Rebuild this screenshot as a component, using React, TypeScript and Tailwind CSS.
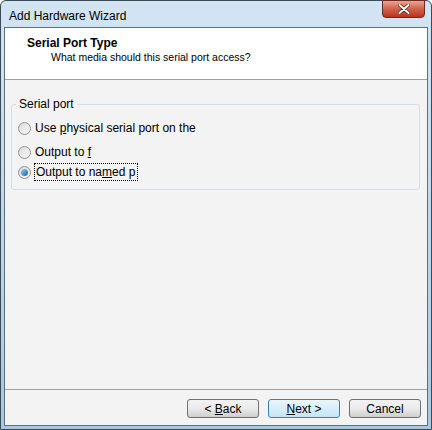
const Radio = ({ checked }: { checked?: boolean }) => (
  <span className="relative flex h-[13px] w-[13px] shrink-0 items-center justify-center rounded-full border border-[#8f8f8f] bg-gradient-to-br from-[#dcdcdc] to-[#f8f8f8]">
    {checked && (
      <span className="h-[7px] w-[7px] rounded-full bg-gradient-to-br from-[#8fd3f5] to-[#1a5f9c]" />
    )}
  </span>
)

const Button = ({ children, primary }: { children: React.ReactNode; primary?: boolean }) => (
  <div
    className={`flex h-[19px] w-[72px] items-center justify-center rounded-[3px] border text-[12px] text-black ${
      primary
        ? "border-[#3c7fb1] bg-gradient-to-b from-[#eaf6fd] to-[#c4e5f6]"
        : "border-[#707070] bg-gradient-to-b from-[#f2f2f2] via-[#ebebeb] to-[#cfcfcf]"
    }`}
  >
    <span className="whitespace-pre">{children}</span>
  </div>
)

export default function App() {
  return (
    <div className="flex h-[430px] w-[432px] flex-col rounded-t-[6px] border border-[#3a4a57] bg-gradient-to-b from-[#d3e5f3] via-[#c0d8ec] to-[#a9c6e0] font-['Liberation_Sans',sans-serif]">
      {/* title bar */}
      <div className="flex h-[26px] items-start justify-between pl-[8px] pr-[6px]">
        <span className="pt-[6px] text-[12px] text-black">Add Hardware Wizard</span>
        <div className="mt-[-1px] flex h-[18px] w-[43px] items-center justify-center rounded-b-[4px] border border-[#6b2a22] bg-gradient-to-b from-[#e9a494] via-[#d2604a] to-[#b8331c]">
          <svg width="12" height="10" viewBox="0 0 12 10">
            <path d="M1.5 1 L10.5 9 M10.5 1 L1.5 9" stroke="#4a1a12" strokeWidth="3.4" strokeLinecap="round" />
            <path d="M1.5 1 L10.5 9 M10.5 1 L1.5 9" stroke="#ffffff" strokeWidth="2" strokeLinecap="round" />
          </svg>
        </div>
      </div>

      {/* client */}
      <div className="mx-[3px] mb-[3px] flex flex-1 flex-col border border-[#5a6f80] bg-[#f3f3f3]">
        <div className="h-[52px] border-b border-[#a0a0a0] bg-white pl-[22px] pt-[8px]">
          <div className="text-[12px] font-bold leading-[14px] text-black">Serial Port Type</div>
          <div className="pl-[24px] text-[10.5px] leading-[14px] text-black">What media should this serial port access?</div>
        </div>

        <div className="flex-1 px-[6px] pt-[24px] text-[12px] text-black">
          <div className="relative h-[86px] w-[409px] rounded-[3px] border border-[#d5dfe5] pl-[6px] pt-[14px]">
            <span className="absolute left-[4px] top-[-9px] bg-[#f3f3f3] px-[3px] leading-[16px]">Serial port</span>
            <div className="flex h-[18px] items-center gap-[4px]">
              <Radio />
              <span>
                Use <u>p</u>hysical serial port on the
              </span>
            </div>
            <div className="mt-[6px] flex h-[18px] items-center gap-[4px]">
              <Radio />
              <span className="whitespace-nowrap">
                Output to <u>f</u>
              </span>
            </div>
            <div className="mt-[2px] flex h-[18px] items-center gap-[3px]">
              <Radio checked />
              <span className="whitespace-nowrap border border-dotted border-black pl-[1px] pr-[2px] leading-[16px]">
                Output to na<u>m</u>ed p
              </span>
            </div>
          </div>
        </div>

        <div className="flex h-[36px] items-start justify-end gap-[9px] border-t border-[#a0a0a0] pr-[6px] pt-[9px]">
          <Button>
            {"< "}
            <u>B</u>ack
          </Button>
          <Button primary>
            <u>N</u>ext {">"}
          </Button>
          <Button>Cancel</Button>
        </div>
      </div>
    </div>
  )
}
